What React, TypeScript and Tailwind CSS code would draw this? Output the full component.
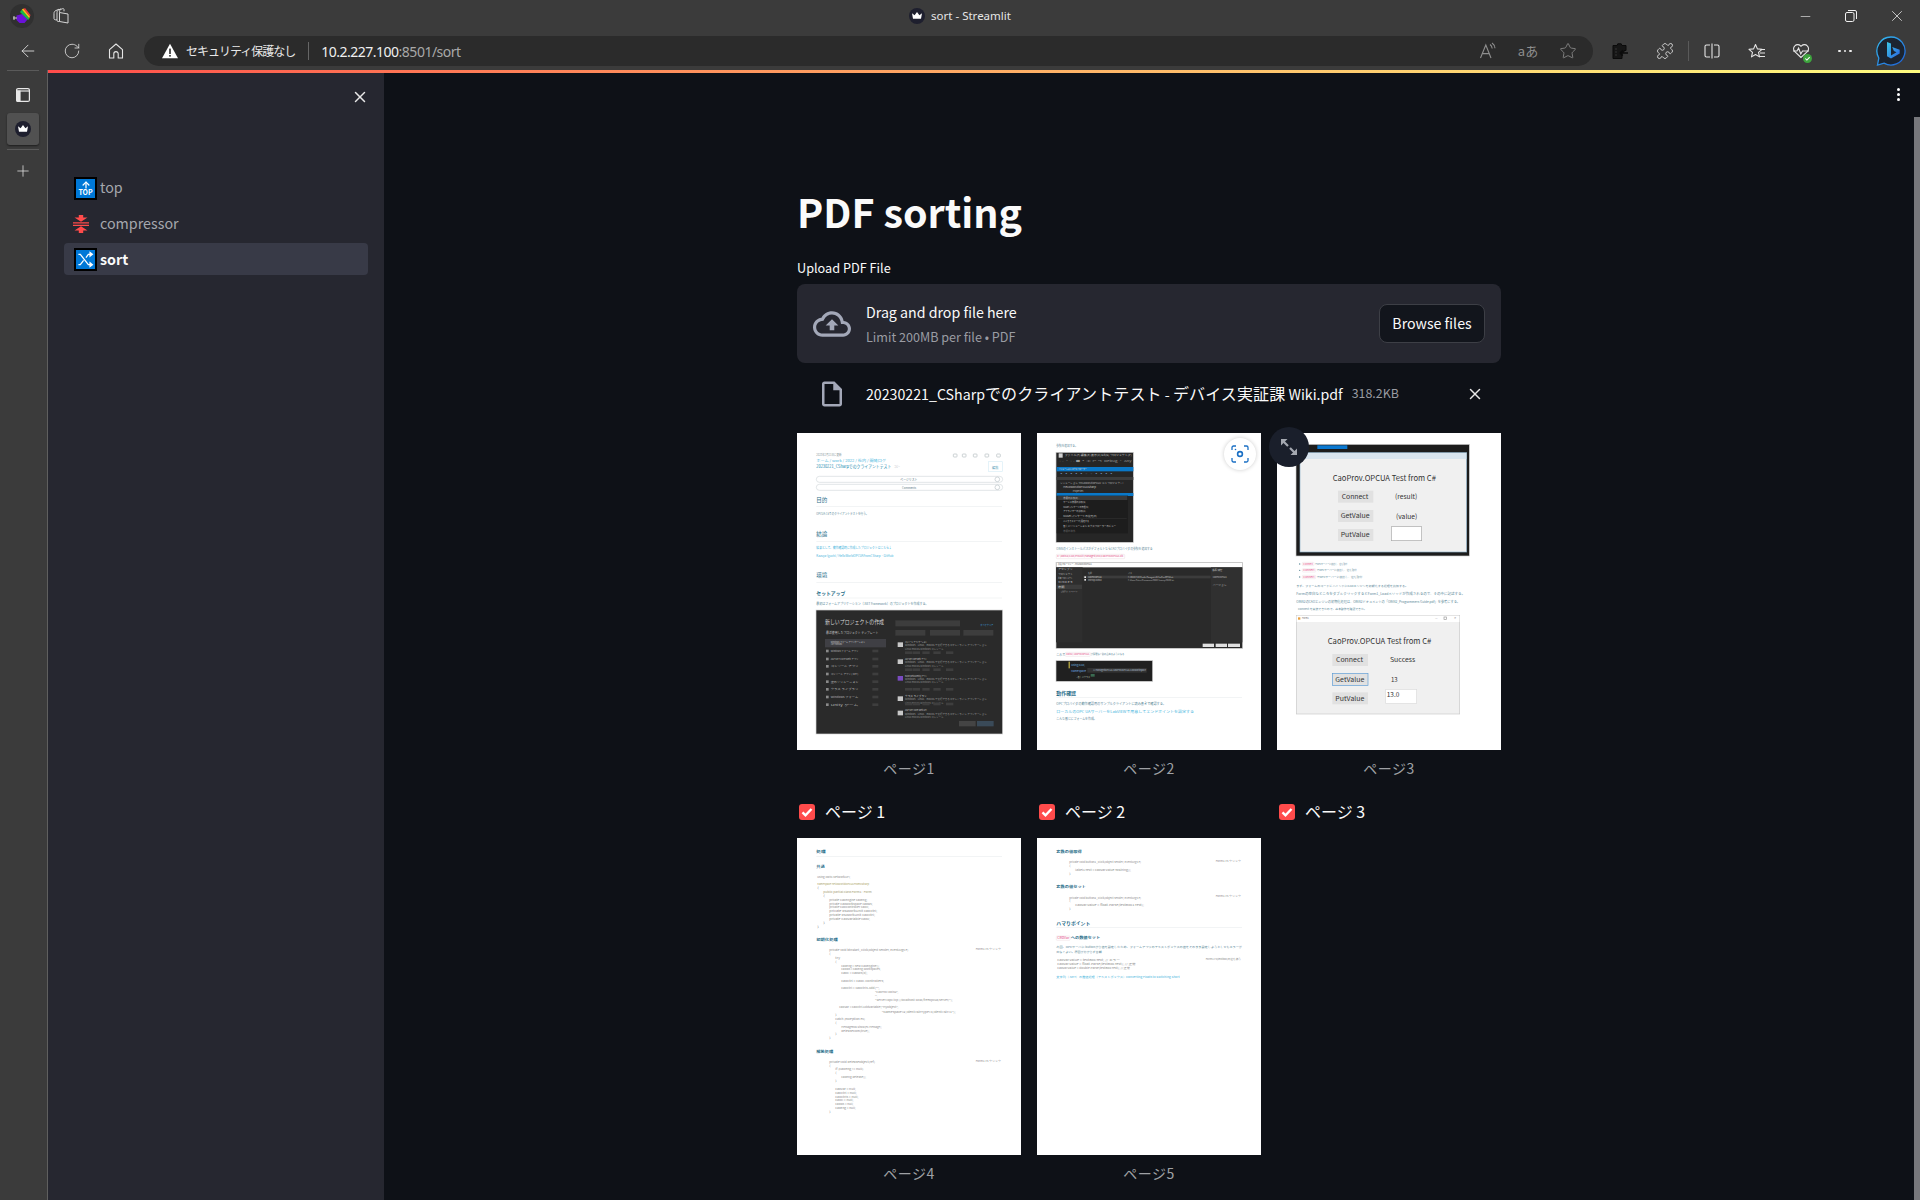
import React from 'react';
import { ArrowLeft, RotateCw, Plus, Star, X, Minus, Puzzle, ArrowUp } from 'lucide-react';

type TextProps = { a: number; b: number; y: number; s: string; c?: string; fs?: number; bold?: boolean };

// thumbnails are drawn in the coordinates of a 3x crop of the page
const T = ({ a, b, y, s, c = '#5a8797', fs = 11, bold }: TextProps) => (
  <text x={a} y={y + fs * 0.36} textLength={b - a} lengthAdjust="spacingAndGlyphs" fontSize={fs} fill={c} fontWeight={bold ? 700 : 400}>
    {s}
  </text>
);

const Hr = ({ y, c = '#eceff1' }: { y: number; c?: string }) => <rect x={79} y={y} width={557} height={2} fill={c} />;

const B = ({ x, y, w, h, c, s, r }: { x: number; y: number; w: number; h: number; c: string; s?: string; r?: number }) => (
  <rect x={x} y={y} width={w} height={h} fill={c} stroke={s} strokeWidth={s ? 2 : 0} rx={r} />
);

const HEAD = '#1f6c88';
const LINK = '#45b4dc';
const CODE = '#8a8a8a';

function PageSvg({ top, children }: { top: number; children: React.ReactNode }) {
  return (
    <svg viewBox={`21 ${top} 672 951`} className="block w-full h-[317px] bg-white overflow-hidden">
      {children}
    </svg>
  );
}

function PageOne() {
  const leftRows = [
    ['Windows フォーム アプリ', 663],
    ['ASP.NET Core Web アプリ', 687],
    ['コンソール アプリ', 709],
    ['コンソール アプリ (.NET)', 732],
    ['空のソリューション', 755],
    ['クラス ライブラリ', 778],
    ['Windows フォーム', 801],
    ['Unity ゲーム', 824],
  ] as const;
  const rightRows = [
    ['コンソール アプリケーション', 636, 668],
    ['ASP.NET Core Web アプリ', 687, 719],
    ['Blazor WebAssembly アプリ', 737, 778],
    ['クラス ライブラリ', 798, 822],
    ['ASP.NET Core Web API', 841, 0],
  ] as const;
  return (
    <PageSvg top={9}>
      <T a={79} b={155} y={75} s="2023年2月21日に更新" c="#8b9aa0" />
      <T a={79} b={288} y={92} s="ホーム / work / 2022 / 社内 / 開発ログ" c={LINK} />
      <T a={79} b={304} y={110} s="20230221_CSharpでのクライアントテスト" c="#1689ad" fs={13} />
      <T a={312} b={330} y={110} s="コピー" c="#b8c0c4" />
      {[495, 522, 555, 590, 625].map((x) => (
        <B key={x} x={x - 5} y={72} w={11} h={9} c="none" s="#b4bcc0" r={2} />
      ))}
      <B x={595} y={95} w={42} h={29} c="#fff" s="#d9eef6" />
      <T a={606} b={626} y={115} s="編集" c="#4f9ab5" fs={9} />
      {[148, 172].map((y, i) => (
        <g key={y}>
          <B x={79} y={y - 9} w={559} h={18} c="#fff" s="#d3dadd" r={9} />
          <T a={i ? 336 : 331} b={i ? 378 : 382} y={y} s={i ? 'Comments' : 'ページリスト'} c="#5b7580" />
          <circle cx={622} cy={y} r={7} fill="none" stroke="#b9c3c7" strokeWidth={2} />
        </g>
      ))}
      <T a={79} b={112} y={210} s="目的" c={HEAD} fs={16} />
      <Hr y={228} />
      <T a={79} b={235} y={251} s="OPCUA C#でのクライアントテストを行う。" />
      <T a={79} b={112} y={311} s="結論" c={HEAD} fs={16} />
      <Hr y={333} />
      <T a={79} b={305} y={353} s="結果として、動作確認時に作成したプロジェクトはこちら↓" c={LINK} />
      <T a={79} b={310} y={377} s="Kazuya-Iguchi / HelloWorldOPCUAFromCSharp · GitHub" c={LINK} />
      <T a={79} b={112} y={435} s="環境" c={HEAD} fs={16} />
      <Hr y={457} />
      <T a={79} b={166} y={489} s="セットアップ" c={HEAD} fs={15} bold />
      <Hr y={503} />
      <T a={79} b={415} y={521} s="最初はフォームアプリケーション（.NET Framework）のプロジェクトを作成する。" />
      <B x={78} y={540} w={560} h={372} c="#2a2a2a" s="#d6d6d6" />
      <T a={105} b={282} y={575} s="新しいプロジェクトの作成" c="#d6d6d6" fs={17} />
      <T a={108} b={265} y={608} s="最近使用したプロジェクト テンプレート" c="#c4c4c4" fs={9} />
      <B x={316} y={571} w={194} h={18} c="#3d3d3d" />
      <T a={571} b={610} y={584} s="すべてクリア" c="#3f9fdc" fs={7} />
      {[316, 420, 520].map((x) => (
        <B key={x} x={x} y={600} w={90} h={17} c="#3d3d3d" />
      ))}
      <B x={105} y={627} w={183} h={25} c="#3f3f44" />
      <T a={122} b={225} y={635} s="Windows フォーム アプリケーション" c="#c8c8c8" fs={7} />
      <T a={122} b={157} y={643} s="(.NET Framework)" c="#c8c8c8" fs={6} />
      {leftRows.map(([s, y]) => (
        <g key={y}>
          <B x={108} y={y - 4} w={8} h={8} c="#8a8a8a" />
          <T a={122} b={205} y={y} s={s} c="#b4b4b4" fs={7} />
          <B x={247} y={y - 4} w={18} h={8} c="#3e3e3e" />
        </g>
      ))}
      {rightRows.map(([s, y, chipY]) => (
        <g key={y}>
          <B x={323} y={y + 1} w={16} h={14} c={y === 737 ? '#7a4bc0' : '#c8c8c8'} />
          <T a={345} b={410} y={y} s={s} c="#c4c4c4" fs={7} />
          <T a={345} b={590} y={y + 11} s="Windows、Linux、macOS で実行できるコマンドライン アプリケーション" c="#9a9a9a" fs={6} />
          <T a={345} b={460} y={y + 21} s="Linux macOS Windows コンソール" c="#8a8a8a" fs={6} />
          {chipY > 0 &&
            [345, 368, 397, 430, 468].map((x) => <B key={x} x={x} y={chipY - 4} w={22} h={8} c="#3e3e3e" />)}
        </g>
      ))}
      <B x={507} y={873} w={50} h={16} c="#444" />
      <B x={561} y={873} w={50} h={16} c="#3a4a58" />
    </PageSvg>
  );
}

function PageTwo() {
  return (
    <PageSvg top={9}>
      <T a={79} b={143} y={47} s="参照を追加する。" />
      <B x={78} y={67} w={232} h={270} c="#262626" s="#cfcfcf" />
      <T a={104} b={305} y={76} s="ファイル(F)  編集(E)  表示(V)  Git(G)  プロジェクト(P)" c="#c2c2c2" fs={8} />
      <B x={86} y={70} w={12} h={13} c="#d0d0d0" />
      <T a={88} b={305} y={94} s="○ ・ ○  ■ ▪ ▣ ↶ ↷  Debug ・ Any" c="#9a9a9a" fs={8} />
      <B x={80} y={111} w={230} h={13} c="#0a78c8" />
      <T a={86} b={170} y={117} s="ソリューション エクスプローラー" c="#e6e6e6" fs={7} />
      <T a={88} b={250} y={132} s="▪ ▪ ▪ ▪ ▪ ◦ ◦ ▪ ▪ ▪ ▪" c="#7fa6d6" fs={9} />
      <B x={80} y={141} w={230} h={9} c="#3c3c3c" />
      <T a={90} b={280} y={160} s="ソリューション 'HelloWorldOPCUA' (1/1 プロジェクト)" c="#b8b8b8" fs={6} />
      <T a={100} b={198} y={172} s="HelloWorldOPCUASharp" c="#c8c8c8" fs={7} />
      <T a={128} b={160} y={183} s="Properties" c="#b8b8b8" fs={7} />
      <B x={80} y={189} w={230} h={9} c="#0a78c8" />
      <B x={80} y={197} w={214} h={113} c="#1d1d1d" />
      <B x={82} y={198} w={210} h={12} c="#3a3a3a" />
      {[
        ['参照の追加(R)...', 203, 150],
        ['サービス参照の追加(S)...', 217, 172],
        ['NuGet パッケージの管理(N)...', 230, 180],
        ['アナライザーの追加(A)...', 243, 172],
        ['NuGet パッケージの復元(E)', 257, 200],
        ['ここまでスコープを限定する', 272, 177],
        ['新しいソリューション エクスプローラーのビュー', 287, 258],
        ['参照の除外', 303, 136],
      ].map(([s, y, b]) => (
        <T key={y} a={100} b={b as number} y={y as number} s={s as string} c={y === 303 ? '#666' : '#c0c0c0'} fs={7} />
      ))}
      <B x={84} y={265} w={206} h={1} c="#444" />
      <T a={79} b={368} y={355} s="ORiNのインストールパスがデフォルトならCAOプロバイダの参照を追加する" />
      <B x={79} y={373} w={205} h={13} c="#fff" s="#f1e6ea" r={2} />
      <T a={82} b={280} y={379} s="C:\ORiN2\CAO\ProvAtl\Managed\x64\CaoProvOPCUA.dll" c="#e2447c" fs={8} />
      <B x={78} y={397} w={560} h={258} c="#2a2a2a" s="#cfcfcf" />
      <B x={79} y={398} w={558} h={14} c="#fff" />
      <T a={84} b={185} y={404} s="参照マネージャー - HelloWorldOPCUA" c="#555" fs={6} />
      <B x={78} y={412} w={80} h={225} c="#2e2e2e" />
      {['アセンブリ', 'プロジェクト', '共有プロジェクト', 'COM'].map((s, i) => (
        <T key={s} a={84} b={128} y={418 + i * 13} s={s} c="#b8b8b8" fs={7} />
      ))}
      <B x={79} y={464} w={77} h={13} c="#3c3c3c" />
      <T a={84} b={104} y={470} s="参照" c="#d0d0d0" fs={7} />
      <T a={92} b={142} y={484} s="最近使用したファイル" c="#a8a8a8" fs={5} />
      <T a={174} b={186} y={431} s="名前" c="#a0a0a0" fs={6} />
      <T a={294} b={306} y={431} s="パス" c="#a0a0a0" fs={6} />
      <B x={160} y={437} w={382} h={8} c="#3c3c3c" />
      <B x={163} y={439} w={5} h={5} c="#e6e6e6" />
      <B x={163} y={447} w={5} h={5} c="#e6e6e6" />
      <T a={174} b={215} y={441} s="CaoProvOPCUA" c="#d0d0d0" fs={6} />
      <T a={294} b={430} y={441} s="C:\ORiN2\CAO\ProvAtl\Managed\x64\CaoProvOPCUA.dll" c="#c8c8c8" fs={5} />
      <T a={174} b={215} y={450} s="Interop.ORiN2" c="#c0c0c0" fs={6} />
      <T a={294} b={432} y={450} s="C:\Users\Public\Documents\ORiN2\Interop.ORiN2.dll" c="#b8b8b8" fs={5} />
      <B x={543} y={412} w={94} h={225} c="#303030" />
      <T a={546} b={578} y={420} s="検索" c="#a8a8a8" fs={7} />
      <T a={548} b={590} y={441} s="CaoProvOPCUA" c="#c0c0c0" fs={6} />
      <T a={548} b={590} y={465} s="バージョン" c="#a8a8a8" fs={6} />
      {[518, 557, 594].map((x, i) => (
        <B key={x} x={x} y={641} w={i === 2 ? 36 : 34} h={10} c="#e0e0e0" />
      ))}
      <T a={79} b={106} y={673} s="これで" />
      <B x={106} y={667} w={75} h={12} c="#fff" s="#f1e6ea" r={2} />
      <T a={109} b={178} y={673} s="ORiN2, CaoProvOPCUA" c="#e2447c" fs={6} />
      <T a={182} b={283} y={673} s="が問題なく読み込めるようになる" fs={8} />
      <B x={78} y={692} w={290} h={62} c="#202020" s="#cfcfcf" />
      <B x={116} y={695} w={3} h={20} c="#e8d44d" />
      <T a={124} b={165} y={705} s="using CAO;" c="#6fb8e0" fs={7} />
      <T a={124} b={168} y={723} s="namespace" c="#6fa8e0" fs={7} />
      <B x={172} y={714} w={178} h={14} c="#333" />
      <T a={190} b={348} y={721} s="{} ManagedOPCUA  CaoProvOPCUA.CaoWorkspace" c="#b8c8dc" fs={6} />
      <T a={140} b={180} y={742} s="• 新しいクラス" c="#a8b8a8" fs={7} />
      <B x={182} y={732} w={12} h={8} c="#3a6a50" />
      <T a={79} b={138} y={789} s="動作確認" c={HEAD} fs={14} bold />
      <Hr y={802} />
      <T a={79} b={408} y={820} s="OPCプロバイダの動作確認用のサンプルクライアントに読み書きで確認する。" />
      <T a={79} b={492} y={844} s="ローカルのOPC UAサーバーをLabVIEWで用意してエンドポイントを設定する" c={LINK} />
      <T a={79} b={200} y={866} s="こんな感じにフォームを作成。" />
    </PageSvg>
  );
}

function PageThree() {
  const first = [
    ['Connect', 182],
    ['GetValue', 240],
    ['PutValue', 297],
  ] as const;
  const second = [
    ['Connect', 672],
    ['GetValue', 730],
    ['PutValue', 787],
  ] as const;
  return (
    <PageSvg top={9}>
      <B x={78} y={43} w={520} h={335} c="#1c1c1c" s="#cfcfcf" />
      <B x={142} y={46} w={90} h={11} c="#0a78d0" />
      <B x={90} y={68} w={500} h={298} c="#f0f0f0" s="#8eb0c8" />
      <B x={91} y={69} w={498} h={18} c="#d8e4ee" />
      <T a={188} b={498} y={145} s="CaoProv.OPCUA Test from C#" c="#333" fs={24} />
      {first.map(([s, y]) => (
        <g key={s}>
          <B x={204} y={y} w={106} h={36} c="#e1e1e1" />
          <T a={s === 'Connect' ? 215 : 212} b={s === 'Connect' ? 295 : 299} y={y + 18} s={s} c="#333" fs={20} />
        </g>
      ))}
      <T a={375} b={442} y={201} s="(result)" c="#333" fs={20} />
      <T a={378} b={442} y={260} s="(value)" c="#333" fs={20} />
      <B x={364} y={290} w={91} h={42} c="#fff" s="#a8a8a8" />
      {[
        [97, 402, 132, 232],
        [97, 421, 137, 260],
        [97, 441, 137, 277],
      ].map(([x, y, c, b]) => (
        <g key={y}>
          <circle cx={89} cy={y} r={2} fill="#5a8797" />
          <B x={x} y={y - 5} w={c - x} h={10} c="#fff" s="#f1e6ea" r={2} />
          <T a={x + 3} b={c - 3} y={y} s="Connect" c="#e2447c" fs={7} />
          <T a={c + 3} b={b} y={y} s="でOPCサーバーに接続し、値を取得" fs={6} />
        </g>
      ))}
      <T a={79} b={414} y={469} s="まず、フォームのコードビハインドにCAOエンジンを初期化する処理を追加する。" fs={8} />
      <T a={79} b={585} y={492} s="Formの空白なところをダブルクリックするとForm1_Loadメソッドが作成されるので、その中に記述する。" fs={9} />
      <T a={79} b={570} y={515} s="ORiN2のCAOエンジンの初期化処理は、ORiN2ドキュメントの「ORiN2_Programmers Guide.pdf」を参考にする。" fs={9} />
      <T a={84} b={290} y={537} s="Connect を実装できたので、基本動作を確認できた。" fs={8} />
      <B x={79} y={556} w={490} h={296} c="#f0f0f0" s="#c8c8c8" />
      <B x={80} y={557} w={488} h={19} c="#fff" />
      <B x={84} y={562} w={7} h={7} c="#e8a040" />
      <T a={96} b={116} y={565} s="Form1" c="#666" fs={7} />
      <T a={495} b={503} y={565} s="—" c="#777" fs={8} />
      <B x={522} y={561} w={7} h={7} c="none" s="#999" />
      <T a={551} b={559} y={565} s="✕" c="#777" fs={8} />
      <T a={173} b={484} y={634} s="CaoProv.OPCUA Test from C#" c="#333" fs={24} />
      {second.map(([s, y]) => (
        <g key={s}>
          <B x={187} y={y} w={107} h={36} c="#e1e1e1" s={s === 'GetValue' ? '#5b9bd5' : undefined} />
          <T a={s === 'Connect' ? 198 : 196} b={s === 'Connect' ? 279 : 283} y={y + 18} s={s} c="#333" fs={20} />
        </g>
      ))}
      <T a={360} b={436} y={690} s="Success" c="#333" fs={20} />
      <T a={363} b={383} y={748} s="13" c="#333" fs={20} />
      <B x={347} y={778} w={93} h={42} c="#fff" s="#dcdcdc" />
      <T a={350} b={388} y={795} s="13.0" c="#333" fs={20} />
    </PageSvg>
  );
}

const fourLines: [number, number, number, string, string?][] = [
  [82, 181, 380, 'using ORiN.NetworkAPI;'],
  [82, 237, 403, 'namespace HelloWorldOPCUAFromCSharp', '#a8a060'],
  [82, 87, 414, '{'],
  [100, 245, 425, 'public partial class Form1 : Form', '#a09a70'],
  [100, 105, 437, '{'],
  [118, 232, 449, 'private CaoEngine caoEng;'],
  [118, 248, 461, 'private CaoWorkspace caoWs;'],
  [118, 237, 472, 'private CaoController caoC;'],
  [118, 262, 484, 'private RSWorkUnit caoCtrl;'],
  [118, 255, 495, 'private RSWorkUnit caoCtrl;'],
  [118, 240, 507, 'private CaoVariable caoV;'],
  [100, 105, 518, '}'],
  [82, 87, 530, '}'],
  [118, 355, 600, 'private void btnStart_Click(object sender, EventArgs e)'],
  [118, 122, 612, '{'],
  [136, 150, 624, 'try'],
  [136, 140, 635, '{'],
  [154, 268, 647, 'caoEng = new CaoEngine();'],
  [154, 272, 658, 'caoWs = caoEng.Workspaces;'],
  [154, 232, 670, 'caoC = caoWs[0];'],
  [154, 282, 692, 'caoCtrl = caoC.Controllers;'],
  [154, 268, 715, 'caoCtrl = caoCtrls.Add("",'],
  [255, 325, 726, '"CaoProv.ORiN2",'],
  [255, 262, 738, '"",'],
  [255, 488, 750, '"Server=opc.tcp://localhost:4840/freeopcua/server/");'],
  [148, 325, 772, 'caoVar = caoCtrl.AddVariable("MyObject",'],
  [275, 497, 785, '"Namespace=2;Ident=StrType=4;Ident=Str=1");'],
  [136, 140, 795, '}'],
  [136, 225, 807, 'catch (Exception ex)'],
  [136, 140, 818, '{'],
  [154, 275, 830, 'MessageBox.Show(ex.Message);'],
  [154, 238, 842, 'ReleaseCom(true);'],
  [136, 140, 853, '}'],
  [118, 122, 865, '}'],
  [118, 255, 936, 'private void ReleaseObject(ref)'],
  [118, 122, 947, '{'],
  [136, 220, 958, 'if (caoEng != null)'],
  [136, 140, 970, '{'],
  [154, 228, 982, 'caoEng.Release();'],
  [136, 140, 993, '}'],
  [136, 198, 1017, 'caoVar = null;'],
  [136, 200, 1028, 'caoCtrl = null;'],
  [136, 205, 1040, 'caoCtrls = null;'],
  [136, 190, 1051, 'caoC = null;'],
  [136, 190, 1062, 'caoWs = null;'],
  [136, 197, 1074, 'caoEng = null;'],
  [118, 122, 1085, '}'],
];

function PageFour() {
  return (
    <PageSvg top={264}>
      <T a={79} b={107} y={305} s="処理" c={HEAD} fs={10} bold />
      <Hr y={318} />
      <T a={79} b={104} y={349} s="共通" c={HEAD} fs={10} bold />
      <T a={79} b={143} y={570} s="初期化処理" c={HEAD} fs={10} bold />
      <T a={79} b={130} y={904} s="解放処理" c={HEAD} fs={10} bold />
      <T a={557} b={633} y={597} s="Form1.cs クリック" c={CODE} fs={7} />
      <T a={557} b={633} y={932} s="Form1.cs クリック" c={CODE} fs={7} />
      {fourLines.map(([a, b, y, s, c]) => (
        <T key={y} a={a} b={b} y={y} s={s} c={c ?? CODE} fs={8} />
      ))}
    </PageSvg>
  );
}

function PageFive() {
  const lines: [number, number, number, string][] = [
    [118, 333, 96, 'private void button1_Click(object sender, EventArgs e)'],
    [118, 122, 108, '{'],
    [136, 303, 120, 'label1.Text = caoVar.Value.ToString();'],
    [118, 122, 132, '}'],
    [118, 333, 203, 'private void button2_Click(object sender, EventArgs e)'],
    [118, 122, 214, '{'],
    [136, 342, 226, 'caoVar.Value = float.Parse(textBox1.Text);'],
    [118, 122, 237, '}'],
    [82, 270, 390, 'caoVar.Value = textBox.Text; // エラー'],
    [82, 317, 402, 'caoVar.Value = float.Parse(textBox.Text); // 正常'],
    [82, 300, 413, 'caoVar.Value = double.Parse(textBox.Text); // 正常'],
  ];
  return (
    <PageSvg top={24}>
      <T a={79} b={155} y={66} s="変数の値取得" c={HEAD} fs={10} bold />
      <T a={79} b={168} y={171} s="変数の値セット" c={HEAD} fs={10} bold />
      <T a={557} b={633} y={92} s="Form1.cs クリック" c={CODE} fs={7} />
      <T a={557} b={633} y={198} s="Form1.cs クリック" c={CODE} fs={7} />
      {lines.map(([a, b, y, s]) => (
        <T key={y} a={a} b={b} y={y} s={s} c={CODE} fs={8} />
      ))}
      <T a={79} b={181} y={279} s="ハマりポイント" c={HEAD} fs={14} bold />
      <Hr y={291} />
      <B x={79} y={318} w={41} h={13} c="#fff" s="#f1e6ea" r={2} />
      <T a={82} b={118} y={324} s="CRDVar" c="#e2447c" fs={9} />
      <T a={122} b={211} y={324} s="への数値セット" c={HEAD} fs={11} bold />
      <T a={79} b={636} y={352} s="今回、OPCサーバに buttonから値を設定したため、フォームアプリのテキストボックスの値をそのまま設定しようとしてもエラーが" fs={8} />
      <T a={79} b={215} y={365} s="出なくよい。原因が分からず苦戦" fs={8} />
      <T a={527} b={633} y={386} s="Form1.cs(textbox)の値を使う" c={CODE} fs={7} />
      <T a={79} b={449} y={440} s="文字列（.NET）の数値処理（テキストボックス）Converting Floats to Switching Short" c={LINK} fs={8} />
    </PageSvg>
  );
}

function Crown({ className }: { className?: string }) {
  return (
    <svg viewBox="0 0 16 16" className={className}>
      <circle cx="8" cy="8" r="8" fill="#1e1f2e" />
      <path d="M3 5.2l2.6 2L8 4l2.4 3.2L13 5.2l-1 5.6H4z" fill="#fff" />
    </svg>
  );
}

function BrowserLogo() {
  return (
    <svg viewBox="0 0 24 24" className="w-6 h-6">
      <circle cx="12" cy="12" r="12" fill="#303030" />
      <path d="M6.5 11.5l6-1.5 5 5.5-3 3.5H9.5L6.5 16z" fill="#6a12d8" />
      <path d="M12 5.5l7.5 9-1.5 1.5L10 8z" fill="#18b848" />
      <path d="M13.5 4.5l6.5 8-.8 1.7-7.4-8.7z" fill="#f2c21a" />
      <path d="M15 4l5.5 7-.6 1.5-6.4-7.6z" fill="#ee3a3a" />
      <path d="M4 12v4M3 14h4" stroke="#ccc" strokeWidth="1" />
    </svg>
  );
}

function TabsIcon() {
  return (
    <svg viewBox="0 0 18 18" fill="none" stroke="#d6d6d6" strokeWidth="1" className="w-[18px] h-[18px]">
      <path d="M7.5 5.5l8.5 1.5v9l-8.5-1.5z" />
      <path d="M7.5 5.5c0-2 .5-3 1-3l2-.8c.8-.3 1.5 0 1.5 1v1.6" />
      <path d="M7.5 14.5H6.2c-.8 0-1.2-.5-1.2-1.2V5.7c0-1.7.8-2.5 2-3l2-.9" />
      <path d="M5 12.8H3.4c-.8 0-1.4-.5-1.4-1.3V6.4c0-1.6.8-2.4 2-2.9l3-1.3" />
    </svg>
  );
}

function HomeIcon() {
  return (
    <svg viewBox="0 0 18 18" fill="none" stroke="#e6e6e6" strokeWidth="1.1" className="w-[18px] h-[18px]">
      <path d="M9 2L2.5 7.6V16h4.3v-4.2a2.2 2.2 0 0 1 4.4 0V16h4.3V7.6z" strokeLinejoin="round" />
    </svg>
  );
}

function WarnIcon() {
  return (
    <svg viewBox="0 0 16 16" className="w-4 h-4">
      <path d="M8 .8L16 15.2H0z" fill="#fff" />
      <rect x="7.2" y="5.6" width="1.6" height="5.4" fill="#2b2b2b" />
      <rect x="7.2" y="12" width="1.6" height="1.6" fill="#2b2b2b" />
    </svg>
  );
}

function ReadAloudIcon() {
  return (
    <svg viewBox="0 0 18 18" fill="none" stroke="#8e8e8e" strokeWidth="1.1" className="w-[18px] h-[18px]">
      <path d="M1.5 16L6.8 3l5.2 13M3.4 11.6h6.8" />
      <path d="M11 2.5c1.4 1 2 2.3 2.2 4M13 1c1.800 1.200 2.800 3 3 5.200" />
    </svg>
  );
}

function ClipIcon() {
  return (
    <svg viewBox="0 0 18 18" className="w-[18px] h-[18px]">
      <path d="M2 3.5h4l.8-1.7h3.4l.8 1.7h4v5H13v1.700h-2V16.500H2z" fill="#161616" stroke="#0b0b0b" />
      <path d="M9 11h8M9 11l2.800-2.600M9 11l2.800 2.600" stroke="#0b0b0b" strokeWidth="1.5" fill="none" />
      <path d="M4.500 7h1M4.500 10h1M4.500 13h1" stroke="#555" />
    </svg>
  );
}

function SplitIcon() {
  return (
    <svg viewBox="0 0 18 18" fill="none" stroke="#e6e6e6" strokeWidth="1.1" className="w-[18px] h-[18px]">
      <path d="M7 3H3.500A1.500 1.500 0 0 0 2 4.500v9A1.500 1.500 0 0 0 3.500 15H7M11 3h3.500A1.500 1.500 0 0 1 16 4.500v9a1.500 1.500 0 0 1-1.500 1.500H11M9 1.500v15" />
    </svg>
  );
}

function FavListIcon() {
  return (
    <svg viewBox="0 0 18 18" fill="none" stroke="#e6e6e6" strokeWidth="1.1" className="w-[18px] h-[18px]">
      <path d="M7.500 1.500l1.900 4.400 4.600.4-3.500 3 1 4.600-4-2.400-4 2.400 1-4.600L1 6.300l4.600-.4z" strokeLinejoin="round" transform="translate(0 1)" />
      <path d="M12.500 7.500h4.500M12 11h5M11 14.500h6" />
    </svg>
  );
}

function HealthIcon() {
  return (
    <div className="relative w-[18px] h-[18px]">
      <svg viewBox="0 0 18 18" fill="none" stroke="#e6e6e6" strokeWidth="1.1" className="w-[18px] h-[18px]">
        <path d="M9 15.500L2.800 9.600a4 4 0 0 1 0-5.800 4.100 4.100 0 0 1 5.800 0L9 4.300l.5-.5a4.100 4.100 0 0 1 5.800 0 4 4 0 0 1 0 5.800L9 15.500z" />
        <path d="M1 9h4l1.600-3 2.200 6 1.700-3H17" />
      </svg>
      <div className="absolute -right-[2px] -bottom-[3px] flex items-center justify-center w-[9px] h-[9px] rounded-full bg-[#3ea53e]">
        <svg viewBox="0 0 8 8" className="w-[7px] h-[7px]" fill="none" stroke="#fff" strokeWidth="1.2">
          <path d="M1.500 4l1.800 1.800L6.500 2.500" />
        </svg>
      </div>
    </div>
  );
}

function BingIcon() {
  return (
    <svg viewBox="0 0 30 30" className="w-[30px] h-[30px]">
      <defs>
        <linearGradient id="bingA" x1="0" y1="0" x2="1" y2="1">
          <stop offset="0" stopColor="#37bdf0" />
          <stop offset="1" stopColor="#1d5fd8" />
        </linearGradient>
        <linearGradient id="bingB" x1="0" y1="0" x2="1" y2="1">
          <stop offset="0" stopColor="#3cc8e8" />
          <stop offset="1" stopColor="#2a62e0" />
        </linearGradient>
      </defs>
      <path d="M15 1a14 14 0 1 1-7 26.100L1.500 29l1.300-7A14 14 0 0 1 15 1z" fill="#1c2430" stroke="url(#bingA)" strokeWidth="1.3" />
      <path d="M11 6l4 1.400v12l5.500-3.200-2.600-1.200-1.700-4 7.500 2.700v3.800L15 22.500l-4-2.200z" fill="url(#bingB)" />
    </svg>
  );
}

function BookIcon() {
  return (
    <svg viewBox="0 0 16 16" fill="none" stroke="#e8e8e8" strokeWidth="1.2" className="w-4 h-4">
      <rect x="1.600" y="1.600" width="12.800" height="12.800" rx="1.500" />
      <path d="M1.600 4h12.800" />
      <path d="M2 4h3v10H2z" fill="#e8e8e8" />
    </svg>
  );
}

function ShuffleTile() {
  return (
    <div className="flex items-center justify-center w-[23px] h-[23px] bg-[#0078d7] border-2 border-black">
      <svg viewBox="0 0 18 18" fill="none" stroke="#fff" strokeWidth="1.3" className="w-[17px] h-[17px]">
        <path d="M1.500 3.500h2L12 14.500h4M1.500 14.500h2L7 10M9.500 7l2.500-3.500h4" />
        <path d="M13.800 1.500l2.500 2-2.500 2zM13.800 12.500l2.500 2-2.500 2z" fill="#fff" />
      </svg>
    </div>
  );
}

function TopTile() {
  return (
    <div className="flex flex-col items-center justify-center w-[23px] h-[23px] bg-[#0078d7] border-2 border-black">
      <ArrowUp size={10} strokeWidth={3} color="#fff" className="-mb-px" />
      <span className="text-[7px] leading-[7px] font-bold text-white">TOP</span>
    </div>
  );
}

function CompressIcon() {
  return (
    <svg viewBox="0 0 16 18" className="w-4 h-[18px]">
      <path d="M0 7.200h16v1.300H0zM0 9.700h16V11H0zM5.800 0h4.400v2.500h4.300L8 6.800 1.500 2.500h4.300zM8 11.200l6.500 4.300h-4.300V18H5.800v-2.500H1.500z" fill="#ff4b4b" />
    </svg>
  );
}

function CloudUpload() {
  return (
    <svg viewBox="0 0 24 24" className="w-[38px] h-[38px]" fill="#a3a8b8">
      <path d="M19.35 10.04C18.67 6.59 15.64 4 12 4 9.11 4 6.6 5.64 5.35 8.04 2.34 8.36 0 10.91 0 14c0 3.31 2.69 6 6 6h13c2.76 0 5-2.24 5-5 0-2.64-2.05-4.78-4.65-4.96zM19 18H6c-2.21 0-4-1.79-4-4 0-2.05 1.53-3.76 3.56-3.97l1.07-.11.5-.95C8.08 7.14 9.94 6 12 6c2.62 0 4.88 1.86 5.39 4.43l.3 1.5 1.53.11c1.56.1 2.78 1.41 2.78 2.96 0 1.65-1.35 3-3 3zM8 13h2.55v3h2.9v-3H16l-4-4z" />
    </svg>
  );
}

function FileIcon() {
  return (
    <svg viewBox="0 0 24 24" className="w-[30px] h-[30px]" fill="#a3a8b8">
      <path d="M14 2H6c-1.1 0-1.99.9-1.99 2L4 20c0 1.1.89 2 1.99 2H18c1.1 0 2-.9 2-2V8l-6-6zM6 20V4h7v5h5v11H6z" />
    </svg>
  );
}

function ScanIcon() {
  return (
    <svg viewBox="0 0 18 18" fill="none" stroke="#1a6fc4" strokeWidth="1.3" className="w-[18px] h-[18px]">
      <path d="M1 5V2.500A1.500 1.500 0 0 1 2.500 1H5M13 1h2.500A1.500 1.500 0 0 1 17 2.500V5M17 13v2.500a1.500 1.500 0 0 1-1.500 1.500H13M5 17H2.500A1.500 1.500 0 0 1 1 15.500V13" />
      <circle cx="9" cy="9" r="2.400" strokeWidth="1.600" />
      <circle cx="4.500" cy="4.500" r=".8" fill="#1a6fc4" stroke="none" />
    </svg>
  );
}

function ExpandIcon() {
  return (
    <svg viewBox="0 0 18 18" className="w-[18px] h-[18px]" fill="#a4a8b0" stroke="#a4a8b0" strokeWidth="2.200">
      <path d="M2 2l6 6M16 16l-6-6" fill="none" />
      <path d="M1 1h6.500L1 7.500zM17 17h-6.500l6.500-6.500z" stroke="none" />
    </svg>
  );
}

function Slot({ className = 'w-[45px]', children }: { className?: string; children: React.ReactNode }) {
  return <div className={`flex items-center justify-center shrink-0 ${className}`}>{children}</div>;
}

const pages = [
  { label: 'ページ1', view: <PageOne />, check: 'ページ 1' },
  { label: 'ページ2', view: <PageTwo />, check: 'ページ 2' },
  { label: 'ページ3', view: <PageThree />, check: 'ページ 3' },
  { label: 'ページ4', view: <PageFour /> },
  { label: 'ページ5', view: <PageFive /> },
];

export default function App() {
  return (
    <div className="flex flex-col w-full h-screen overflow-hidden bg-[#3b3b3b] font-['Noto_Sans_CJK_JP','Noto_Sans',sans-serif]">
      {/* window title */}
      <div className="grid grid-cols-[1fr_auto_1fr] items-center h-[35px] shrink-0 pb-[3px]">
        <div className="flex items-center">
          <div className="flex justify-center w-[44px]">
            <BrowserLogo />
          </div>
          <div className="flex justify-center w-[34px]">
            <TabsIcon />
          </div>
        </div>
        <div className="flex items-center gap-[6px]">
          <Crown className="w-4 h-4" />
          <span className="font-['Noto_Sans',sans-serif] text-[11.500px] text-[#e6e6e6]">sort - Streamlit</span>
        </div>
        <div className="flex justify-end">
          <Slot className="w-[46px]">
            <Minus size={15} strokeWidth={1} color="#f0f0f0" />
          </Slot>
          <Slot className="w-[46px]">
            <svg viewBox="0 0 12 12" fill="none" stroke="#f0f0f0" className="w-3 h-3">
              <rect x=".5" y="2.500" width="8.500" height="9" rx="1.500" />
              <path d="M3 .5h7a1.500 1.500 0 0 1 1.500 1.500v7" />
            </svg>
          </Slot>
          <Slot className="w-[46px]">
            <X size={18} strokeWidth={1} color="#f0f0f0" />
          </Slot>
        </div>
      </div>

      {/* browser toolbar */}
      <div className="flex items-center h-[35px] shrink-0 pl-[6px] pb-[3px]">
        <Slot className="w-[44px]">
          <ArrowLeft size={20} strokeWidth={1} color="#e8e8e8" />
        </Slot>
        <Slot className="w-[44px]">
          <RotateCw size={18} strokeWidth={1.100} color="#e0e0e0" />
        </Slot>
        <Slot className="w-[44px]">
          <HomeIcon />
        </Slot>
        <div className="flex items-center ml-[6px] w-[1449px] h-[30px] rounded-full bg-[#2b2b2b]">
          <div className="flex items-center flex-1 pl-[18px]">
            <WarnIcon />
            <span className="ml-[8px] text-[12px] tracking-[-1px] text-[#e8e8e8]">セキュリティ保護なし</span>
            <div className="w-px h-[18px] ml-[13px] mr-[12px] bg-[#666]" />
            <span className="font-['Noto_Sans',sans-serif] text-[14px] tracking-[-0.5px] text-[#f0f0f0]">
              10.2.227.100<span className="text-[#a8a8a8]">:8501/sort</span>
            </span>
          </div>
          <Slot className="w-10">
            <ReadAloudIcon />
          </Slot>
          <Slot className="w-10">
            <span className="text-[13px] text-[#8e8e8e]">aあ</span>
          </Slot>
          <Slot className="w-10">
            <Star size={18} strokeWidth={1.100} color="#8e8e8e" />
          </Slot>
          <div className="w-[5px]" />
        </div>
        <Slot className="w-[44px] ml-[5px]">
          <ClipIcon />
        </Slot>
        <Slot className="w-[46px]">
          <Puzzle size={18} strokeWidth={1.100} color="#e6e6e6" />
        </Slot>
        <div className="w-px h-5 bg-[#5a5a5a]" />
        <Slot className="w-[46px]">
          <SplitIcon />
        </Slot>
        <Slot className="w-[44px]">
          <FavListIcon />
        </Slot>
        <Slot className="w-[44px]">
          <HealthIcon />
        </Slot>
        <Slot className="w-[44px]">
          <div className="flex gap-[3px]">
            <div className="w-[2.500px] h-[2.500px] rounded-full bg-[#eee]" />
            <div className="w-[2.500px] h-[2.500px] rounded-full bg-[#eee]" />
            <div className="w-[2.500px] h-[2.500px] rounded-full bg-[#eee]" />
          </div>
        </Slot>
        <Slot className="w-[48px]">
          <BingIcon />
        </Slot>
      </div>

      <div className="flex flex-1 min-h-0">
        {/* vertical tabs strip */}
        <div className="flex flex-col items-center w-[48px] shrink-0 border-r border-[#5f5f5f] pr-[1px]">
          <div className="w-8 h-px bg-[#5a5a5a]" />
          <div className="flex items-center justify-center h-[42px] w-8 pt-[6px]">
            <BookIcon />
          </div>
          <div className="flex items-center justify-center w-8 h-8 rounded-[3px] bg-[#515151] shadow-[0_1px_2px_rgba(0,0,0,0.5)]">
            <Crown className="w-4 h-4" />
          </div>
          <div className="w-8 h-px mt-1 bg-[#5a5a5a]" />
          <div className="flex items-center justify-center h-[41px]">
            <Plus size={18} strokeWidth={1} color="#e8e8e8" />
          </div>
        </div>

        <div className="flex flex-col flex-1 min-w-0">
          <div className="h-[3px] shrink-0 bg-linear-to-r from-[#ff4b4b] to-[#fffd80]" />
          <div className="flex flex-1 min-h-0">
            {/* sidebar */}
            <div className="flex flex-col w-[336px] shrink-0 px-4 bg-[#262730]">
              <div className="flex justify-end h-[99px] pt-[15px] -mr-px">
                <X size={18} strokeWidth={2} color="#e8e8e8" />
              </div>
              <div className="flex flex-col gap-[3.500px] text-[14.300px]">
                <div className="flex items-center gap-[3px] h-8 px-2.5 text-[#a5a7ad]">
                  <TopTile />
                  <span className="-mt-[2px]">top</span>
                </div>
                <div className="flex items-center h-8 px-[9px] text-[#a5a7ad]">
                  <div className="w-[27px]">
                    <CompressIcon />
                  </div>
                  <span className="-mt-[2px]">compressor</span>
                </div>
                <div className="flex items-center gap-[3px] h-8 px-2.5 rounded-[4px] bg-[#383a47] font-semibold text-[#fafafa]">
                  <ShuffleTile />
                  <span>sort</span>
                </div>
              </div>
            </div>

            {/* main */}
            <div className="relative flex flex-1 min-w-0 bg-[#0e1117]">
              <div className="flex-1 min-w-0">
                <div className="w-[704px] mx-auto pt-[107px] text-[#fafafa]">
                  <h1 className="h-[66px] text-[39.400px] leading-[62px] font-bold">PDF sorting</h1>
                  <div className="h-5 mt-3 text-[12.700px] leading-5">Upload PDF File</div>
                  <div className="flex items-center h-[79px] mt-[6px] pl-4 pr-4 rounded-lg bg-[#262730]">
                    <CloudUpload />
                    <div className="flex flex-col flex-1 ml-[15px] pt-[2px]">
                      <span className="text-[14.200px] leading-6">Drag and drop file here</span>
                      <span className="text-[12.600px] leading-[25px] text-[#9a9ca3]">Limit 200MB per file • PDF</span>
                    </div>
                    <div className="flex items-center justify-center w-[106px] h-[39px] rounded-lg border border-[#3d3f46] bg-[#12151c] text-[14.200px]">
                      Browse files
                    </div>
                  </div>
                  <div className="flex items-center h-10 mt-[11px] pl-[20px] pr-[17px]">
                    <FileIcon />
                    <span className="ml-[19px] -mt-[2px] text-[14.200px] whitespace-nowrap">
                      20230221_CSharp<span className="text-[16px] tracking-[0.12px]">でのクライアントテスト</span> - <span className="text-[16px] tracking-[0.12px]">デバイス実証課</span> Wiki.pdf
                    </span>
                    <span className="ml-[9px] -mt-[2px] text-[12.400px] text-[#9a9ca3]">318.2KB</span>
                    <X size={18} strokeWidth={2} color="#e8e8e8" className="ml-auto" />
                  </div>
                  <div className="grid grid-cols-3 gap-x-4 gap-y-4 mt-[19px]">
                    {pages.map((p, i) => (
                      <div key={p.label} className="relative">
                        {p.view}
                        {i === 1 && (
                          <div className="absolute left-[187px] top-[5px] flex items-center justify-center w-8 h-8 rounded-full bg-white shadow-[0_0_4px_rgba(0,0,0,0.2)]">
                            <ScanIcon />
                          </div>
                        )}
                        {i === 2 && (
                          <div className="absolute -left-2 -top-[6px] flex items-center justify-center w-10 h-10 rounded-full bg-[#1a1f2b]">
                            <ExpandIcon />
                          </div>
                        )}
                        <div className="h-5 mt-[10px] text-center text-[14px] tracking-[0.5px] leading-[16px] text-[#9fa1a5]">{p.label}</div>
                        {p.check && (
                          <div className="flex items-center h-5 mt-[22px] pl-[2px]">
                            <div className="flex items-center justify-center w-4 h-4 rounded-[3px] bg-[#ff4b4b]">
                              <svg viewBox="0 0 16 16" fill="none" stroke="#fff" strokeWidth="2.400" className="w-4 h-4">
                                <path d="M3.500 8.300l3 3 6-6.300" />
                              </svg>
                            </div>
                            <span className="ml-[10px] -mt-[2px] text-[16px] leading-5 text-[#fafafa]">{p.check}</span>
                          </div>
                        )}
                      </div>
                    ))}
                  </div>
                </div>
              </div>
              {/* scrollbar thumb */}
              <div className="w-[6px] shrink-0 mt-[44px] bg-[#77787c]" />
              <div className="absolute right-[20px] top-[15px] flex flex-col gap-[2px]">
                <div className="w-[3px] h-[3px] rounded-full bg-white" />
                <div className="w-[3px] h-[3px] rounded-full bg-white" />
                <div className="w-[3px] h-[3px] rounded-full bg-white" />
              </div>
            </div>
          </div>
        </div>
      </div>
    </div>
  );
}
